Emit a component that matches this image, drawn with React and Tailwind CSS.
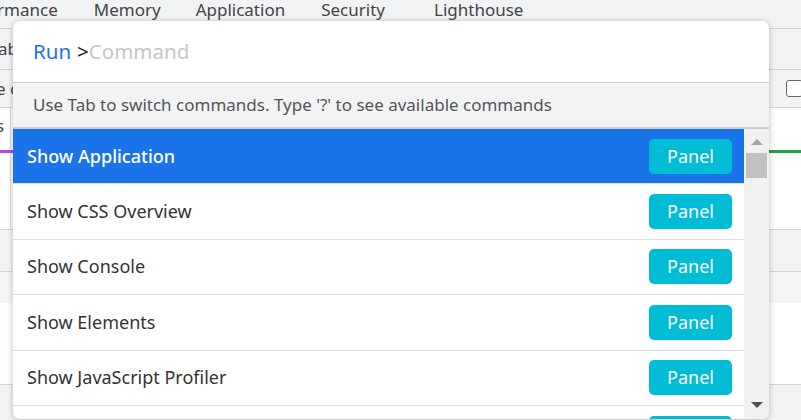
import { useState } from "react";

const commands = [
  "Show Application",
  "Show CSS Overview",
  "Show Console",
  "Show Elements",
  "Show JavaScript Profiler",
  "Show Layers",
];

export default function App() {
  const [selected] = useState(0);

  return (
    <div className="relative w-[801px] h-[420px] overflow-hidden bg-white text-[#333]" style={{ fontFamily: '"Noto Sans", "Open Sans", sans-serif' }}>
      {/* DevTools background */}
      <div className="flex flex-col w-full">
        {/* Tab bar */}
        <div className="h-[29px] shrink-0 bg-[#f1f3f4] border-b border-[#d0d2d6] flex items-center pb-[8px] text-[17px] text-[#444] whitespace-nowrap">
          <span className="-ml-[46px]">Performance</span>
          <span className="ml-[36px]">Memory</span>
          <span className="ml-[35px]">Application</span>
          <span className="ml-[36px]">Security</span>
          <span className="ml-[49px]">Lighthouse</span>
        </div>
        <div className="h-[41px] shrink-0 bg-[#f1f3f4] border-b border-[#d0d2d6] flex items-center text-[17px] text-[#444]">
          <span className="-ml-[2px]">ab</span>
        </div>
        <div className="h-[38px] shrink-0 bg-[#f1f3f4] border-b border-[#d0d2d6] flex items-center justify-between text-[17px] text-[#444]">
          <span className="-ml-[4px]">e c</span>
          <span className="w-[17px] h-[17px] mr-[-2px] border border-[#666] rounded-[3px] bg-white" />
        </div>
        <div className="h-[122px] shrink-0 bg-white border-b border-[#d0d2d6] flex">
          <div className="w-[11px] border-r border-[#ddd] flex flex-col text-[17px] text-[#444]">
            <span className="mt-[7px] leading-[22px] -ml-[4px]">s</span>
            <div className="mt-[13px] h-[3px] bg-[#b84bd0] w-[13px]" />
          </div>
          <div className="flex-1" />
          <div className="w-[32px] flex flex-col">
            <div className="mt-[42px] h-[3px] bg-[#1ea446]" />
          </div>
        </div>
        <div className="h-[42px] shrink-0 bg-[#f1f3f4] border-b border-[#d0d2d6]" />
        <div className="h-[31px] shrink-0 bg-[#f5f5f5]" />
        <div className="h-[82px] shrink-0 bg-white border-b border-[#d0d2d6]" />
        <div className="h-[40px] shrink-0 bg-[#f1f3f4]" />
      </div>

      {/* Command menu */}
      <div className="absolute left-[13px] top-[21px] w-[756px] h-[398px] bg-white rounded-[7px] shadow-[0_1px_6px_rgba(0,0,0,0.25)] flex flex-col overflow-hidden">
        <div className="h-[62px] shrink-0 flex items-center pl-[20px] text-[20.5px] border-b border-[#cfcfcf]">
          <span className="text-[#1a73e8]">Run</span>
          <span className="ml-[6px] text-[#222]">&gt;</span>
          <span className="text-[#c6c6c6]">Command</span>
        </div>
        <div className="h-[46px] shrink-0 bg-[#f1f3f4] flex items-center pl-[20px] text-[17px] text-[#555] border-b-2 border-[#cfcfcf]">
          Use Tab to switch commands. Type '?' to see available commands
        </div>
        <div className="flex flex-1 min-h-0">
          <div className="flex-1 flex flex-col overflow-hidden">
            {commands.map((c, i) => (
              <div
                key={c}
                className={`h-[55.4px] shrink-0 flex items-center justify-between pl-[14px] pr-[12px] border-b border-[#dedede] ${
                  i === selected ? "bg-[#1a73e8] text-white font-medium" : "text-[#333]"
                }`}
              >
                <span className="text-[18px]">{c}</span>
                <span className="w-[83px] h-[35px] rounded-[5px] bg-[#00bcd4] text-white text-[18px] flex items-center justify-center font-normal">
                  Panel
                </span>
              </div>
            ))}
          </div>
          {/* Scrollbar */}
          <div className="w-[25px] bg-[#f1f1f1] flex flex-col items-center">
            <div className="mt-[10px] w-0 h-0 border-l-[6px] border-r-[6px] border-b-[6px] border-l-transparent border-r-transparent border-b-[#a3a3a3]" />
            <div className="mt-[8px] w-[21px] h-[25px] bg-[#c1c1c1]" />
            <div className="mt-auto mb-[11px] w-0 h-0 border-l-[6px] border-r-[6px] border-t-[6px] border-l-transparent border-r-transparent border-t-[#505050]" />
          </div>
        </div>
      </div>
    </div>
  );
}
